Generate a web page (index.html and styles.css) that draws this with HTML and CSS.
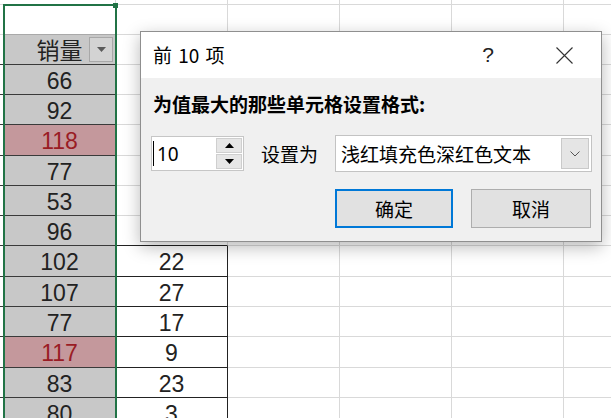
FILE: index.html
```html
<!DOCTYPE html>
<html lang="zh-CN">
<head>
<meta charset="utf-8">
<title>前 10 项</title>
<link rel="stylesheet" href="styles.css">
</head>
<body>
<div class="screen">
  <div class="sheet">
    <div class="row h5"><div class="c edge"></div><div class="c a"></div><div class="c b"></div><div class="c rest"></div></div>
    <div class="row h30"><div class="c edge"></div><div class="c a blank"></div><div class="c b"></div><div class="c rest"></div></div>
    <div class="row h30"><div class="c edge dk"></div><div class="c a hdr dk">销量<span class="filter"><svg width="9" height="5" viewBox="0 0 9 5"><path d="M0 0H9L4.5 5Z" fill="#5a5a5a"/></svg></span></div><div class="c b"></div><div class="c rest"></div></div>
    <div class="row h30"><div class="c edge dk"></div><div class="c a num dk">66</div><div class="c b"></div><div class="c rest"></div></div>
    <div class="row h30"><div class="c edge dk"></div><div class="c a num dk">92</div><div class="c b"></div><div class="c rest"></div></div>
    <div class="row h31"><div class="c edge dk"></div><div class="c a num dk hi">118</div><div class="c b"></div><div class="c rest"></div></div>
    <div class="row h30"><div class="c edge dk"></div><div class="c a num dk">77</div><div class="c b"></div><div class="c rest"></div></div>
    <div class="row h30"><div class="c edge dk"></div><div class="c a num dk">53</div><div class="c b"></div><div class="c rest"></div></div>
    <div class="row h30"><div class="c edge dk"></div><div class="c a num dk">96</div><div class="c b tb"></div><div class="c rest"></div></div>
    <div class="row h31"><div class="c edge dk"></div><div class="c a num dk">102</div><div class="c b num tb tr">22</div><div class="c rest"></div></div>
    <div class="row h30"><div class="c edge dk"></div><div class="c a num dk">107</div><div class="c b num tb tr">27</div><div class="c rest"></div></div>
    <div class="row h30"><div class="c edge dk"></div><div class="c a num dk">77</div><div class="c b num tb tr">17</div><div class="c rest"></div></div>
    <div class="row h31"><div class="c edge dk"></div><div class="c a num dk hi">117</div><div class="c b num tb tr">9</div><div class="c rest"></div></div>
    <div class="row h30"><div class="c edge dk"></div><div class="c a num dk">83</div><div class="c b num tb tr">23</div><div class="c rest"></div></div>
    <div class="row h30"><div class="c edge dk"></div><div class="c a num dk">80</div><div class="c b num tb tr">3</div><div class="c rest"></div></div>
  </div>

  <div class="selection"></div>
  <div class="handle"></div>

  <div class="dialog">
    <div class="titlebar">
      <span class="title">前 10 项</span>
      <span class="help">?</span>
      <span class="close"><svg width="17" height="17" viewBox="0 0 17 17"><path d="M0.5 0.5L16.5 16.5M16.5 0.5L0.5 16.5" stroke="#333" stroke-width="1.1" fill="none"/></svg></span>
    </div>
    <div class="body">
      <div class="label">为值最大的那些单元格设置格式:</div>
      <div class="controls">
        <div class="spin">
          <div class="spin-input"><span class="caret"></span>10</div>
          <div class="spin-btns">
            <div class="spin-btn"><svg width="9" height="5" viewBox="0 0 9 5"><path d="M0 5H9L4.5 0Z" fill="#000"/></svg></div>
            <div class="spin-btn"><svg width="9" height="5" viewBox="0 0 9 5"><path d="M0 0H9L4.5 5Z" fill="#000"/></svg></div>
          </div>
        </div>
        <span class="setas">设置为</span>
        <div class="combo">
          <span class="combo-text">浅红填充色深红色文本</span>
          <div class="combo-btn"><svg width="10" height="6" viewBox="0 0 10 6"><path d="M0.5 0.5L5 5L9.5 0.5" stroke="#555" stroke-width="1" fill="none"/></svg></div>
        </div>
      </div>
      <div class="buttons">
        <button class="btn primary">确定</button>
        <button class="btn">取消</button>
      </div>
    </div>
  </div>
</div>
</body>
</html>
```

FILE: styles.css
```css
* { box-sizing: border-box; }
html, body { margin: 0; padding: 0; background: #fff; }
body { width: 611px; height: 418px; overflow: hidden; }

.screen { position: relative; width: 611px; height: 418px; overflow: hidden; }

.sheet { display: flex; flex-direction: column; }
.row { display: flex; flex: none; }
.h5 { height: 5px; }
.h30 { height: 30px; }
.h31 { height: 31px; }

.c { flex: none; height: 100%; border-bottom: 1px solid #d9d9d9; }
.edge { width: 4px; }
.a { width: 112px; border-right: 1px solid #d9d9d9; background: #fff; }
.b { width: 112px; border-right: 1px solid #d9d9d9; }
.rest {
  flex: 1;
  background: repeating-linear-gradient(90deg, transparent 0 111px, #d9d9d9 111px 112px);
}

.blank { border-bottom-color: #a9a9a9; }
.dk { border-bottom-color: #3a3a3a; }
.a.dk { background: #c8c8c8; }
.a.hi { background: #c4989c; color: #9a1c24; }
.tb { border-bottom-color: #222; }
.tr { border-right-color: #222; }

.num {
  font-family: "Liberation Sans", Arial, sans-serif;
  font-size: 23px;
  line-height: 27px;
  padding-top: 3px;
  text-align: center;
  color: #222;
}

.hdr {
  position: relative;
  font-family: "Noto Sans CJK SC", sans-serif;
  font-size: 23px;
  line-height: 29px;
  text-align: center;
  color: #222;
}
.filter {
  position: absolute;
  left: 85px;
  top: 2px;
  width: 24px;
  height: 25px;
  background: #d3d3d3;
  border: 1px solid #a8a8a8;
  display: flex;
  align-items: center;
  justify-content: center;
}

.selection {
  position: absolute;
  left: 3px;
  top: 4px;
  width: 114px;
  height: 430px;
  border: 2px solid #217346;
  border-bottom: none;
}
.handle {
  position: absolute;
  left: 113px;
  top: 3px;
  width: 5px;
  height: 5px;
  background: #217346;
}

.dialog {
  position: absolute;
  left: 140px;
  top: 31px;
  width: 462px;
  height: 211px;
  border: 1px solid #8f8f8f;
  background: #f0f0f0;
  box-shadow: 0 5px 16px rgba(0, 0, 0, 0.28);
  font-family: "Noto Sans CJK SC", sans-serif;
  color: #000;
  display: flex;
  flex-direction: column;
}

.titlebar {
  height: 46px;
  flex: none;
  background: #fff;
  display: flex;
  align-items: center;
  padding-left: 12px;
}
.title { font-size: 19px; line-height: 24px; flex: 1; word-spacing: 2px; }
.help {
  font-family: "Liberation Sans", Arial, sans-serif;
  font-size: 21px;
  line-height: 24px;
  width: 20px;
  text-align: center;
  color: #222;
  margin-right: 43px;
}
.close {
  width: 46px;
  height: 46px;
  margin-right: 14px;
  display: flex;
  align-items: center;
  justify-content: center;
}

.body { flex: 1; padding: 14px 9px 0 10px; }
.label {
  font-size: 19px;
  font-weight: bold;
  line-height: 24px;
  height: 24px;
  margin-left: 2px;
}

.controls {
  margin-top: 19px;
  height: 37px;
  display: flex;
  align-items: center;
}
.spin {
  width: 93px;
  height: 35px;
  border: 1px solid #c6c6c6;
  background: #fff;
  display: flex;
}
.spin-input {
  flex: 1;
  display: flex;
  align-items: center;
  font-family: "Noto Sans", sans-serif;
  font-size: 19px;
  line-height: 24px;
  padding-left: 1px;
}
.caret { width: 1px; height: 25px; background: #000; margin-right: 3px; }
.spin-btns {
  width: 27px;
  display: flex;
  flex-direction: column;
  padding: 1px 1px 1px 0;
  gap: 1px;
}
.spin-btn {
  flex: 1;
  background: #e6e6e6;
  border: 1px solid #cfcfcf;
  display: flex;
  align-items: center;
  justify-content: center;
}

.setas { font-size: 19px; line-height: 24px; margin-left: 17px; width: 74px; }

.combo {
  width: 257px;
  height: 37px;
  border: 1px solid #c3c3c3;
  background: #fff;
  display: flex;
  align-items: center;
  padding: 2px 2px 2px 5px;
}
.combo-text { flex: 1; font-size: 19px; line-height: 24px; }
.combo-btn {
  width: 28px;
  height: 31px;
  background: #e5e5e5;
  border: 1px solid #c9c9c9;
  display: flex;
  align-items: center;
  justify-content: center;
}

.buttons {
  margin-top: 17px;
  display: flex;
  justify-content: flex-end;
  gap: 18px;
  padding-right: 1px;
}
.btn {
  width: 120px;
  height: 39px;
  background: #e1e1e1;
  border: 1px solid #adadad;
  font-family: "Noto Sans CJK SC", sans-serif;
  font-size: 19px;
  line-height: 24px;
  color: #000;
  padding: 0;
}
.btn.primary { width: 118px; border: 2px solid #0078d7; }
```
